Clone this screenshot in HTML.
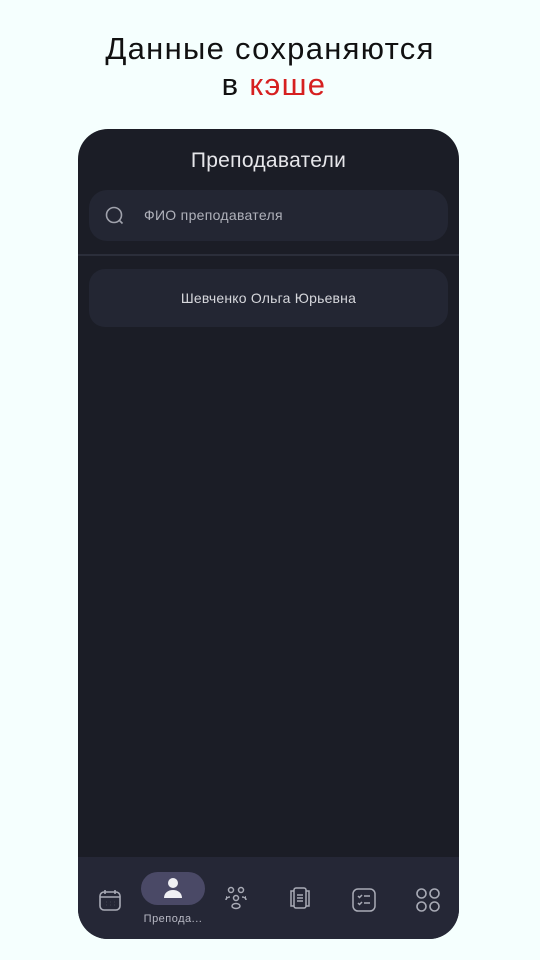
<!DOCTYPE html>
<html><head><meta charset="utf-8"><style>
*{margin:0;padding:0;box-sizing:border-box}
body{width:540px;height:960px;background:#f5fffe;font-family:"Liberation Sans",sans-serif;position:relative;overflow:hidden}
.t{position:absolute;left:0;width:540px;text-align:center;font-size:31px;color:#111;letter-spacing:1.3px}
.phone{position:absolute;left:78px;top:129px;width:381px;height:810px;background:#1b1d26;border-radius:30px;overflow:hidden}
.hd{position:absolute;top:20px;width:100%;text-align:center;color:#e6e6ea;font-size:21px;letter-spacing:.3px}
.search{position:absolute;left:11px;top:61px;width:359px;height:51px;background:#232633;border-radius:18px}
.search span{position:absolute;left:55px;top:17px;color:#b0b2bb;font-size:14px;letter-spacing:.3px}
.line{position:absolute;left:0;top:125px;width:100%;height:2px;background:#2b2e3a}
.item{position:absolute;left:11px;top:140px;width:359px;height:58px;background:#232633;border-radius:16px;text-align:center;line-height:58px;color:#d6d7dc;font-size:14px;letter-spacing:.2px}
.nav{position:absolute;left:0;top:728px;width:100%;height:82px;background:#252736}
.nav svg{position:absolute}
.pill{position:absolute;left:63px;top:15px;width:64px;height:33px;background:#4a4966;border-radius:17px}
.lbl{position:absolute;left:58px;top:56px;color:#b8b9c4;font-size:11px;width:74px;text-align:center;letter-spacing:.5px}
</style></head><body>
<div class="t" style="top:31px">Данные сохраняются</div>
<div class="t" style="top:67px;left:4px">в <span style="color:#d62020">кэше</span></div>
<div class="phone">
<div class="hd">Преподаватели</div>
<div class="search">
<svg width="22" height="22" viewBox="0 0 22 22" style="position:absolute;left:15px;top:15px"><circle cx="10" cy="10" r="7.5" fill="none" stroke="#a0a2ac" stroke-width="1.6"/><path d="M15.5 15.5l3 3" stroke="#a0a2ac" stroke-width="1.6"/></svg>
<span>ФИО преподавателя</span></div>
<div class="line"></div>
<div class="item">Шевченко Ольга Юрьевна</div>
<div class="nav">
<svg width="24" height="24" viewBox="0 0 24 24" style="left:20px;top:31px" fill="none" stroke="#a9abb6" stroke-width="1.6"><rect x="2" y="4" width="20" height="18" rx="4"/><path d="M2 9h20M7 2v4M17 2v4"/><path d="M8 14h.1M12 14h.1M16 14h.1M8 17h.1M12 17h.1M16 17h.1" stroke-width="2"/></svg>
<div class="pill"></div>
<svg width="22" height="22" viewBox="0 0 22 22" style="left:84px;top:20px" fill="#f0f0f4"><circle cx="11" cy="6" r="5"/><path d="M2 21c0-5 4-8 9-8s9 3 9 8z"/></svg>
<div class="lbl">Препода...</div>
<svg width="24" height="26" viewBox="0 0 24 26" style="left:146px;top:29px" fill="none" stroke="#a9abb6" stroke-width="1.5"><circle cx="7" cy="4" r="2.5"/><circle cx="17" cy="4" r="2.5"/><circle cx="12" cy="12" r="2.5"/><path d="M3 11h-1M21 11h1M2 14c0-2 2-3 4-3M22 14c0-2-2-3-4-3"/><ellipse cx="12" cy="20" rx="4" ry="2.5"/></svg>
<svg width="24" height="26" viewBox="0 0 24 26" style="left:210px;top:29px" fill="none" stroke="#a9abb6" stroke-width="1.5"><rect x="6" y="2" width="12" height="20" rx="2"/><path d="M6 5H3v15h3M18 5h3v15h-3M9 9h6M9 12h6M9 15h6"/></svg>
<svg width="24" height="24" viewBox="0 0 24 24" style="left:274px;top:31px" fill="none" stroke="#a9abb6" stroke-width="1.5"><rect x="1" y="1" width="22" height="22" rx="5"/><path d="M6 8l1.5 1.5L10 7M12 8h6M6 15l1.5 1.5L10 14M12 15h6"/></svg>
<svg width="24" height="24" viewBox="0 0 24 24" style="left:338px;top:31px" fill="none" stroke="#a9abb6" stroke-width="1.6"><rect x="1" y="1" width="9" height="9" rx="4.5"/><rect x="14" y="1" width="9" height="9" rx="4.5"/><rect x="1" y="14" width="9" height="9" rx="4.5"/><rect x="14" y="14" width="9" height="9" rx="4.5"/></svg>
</div>
</div>
</body></html>
